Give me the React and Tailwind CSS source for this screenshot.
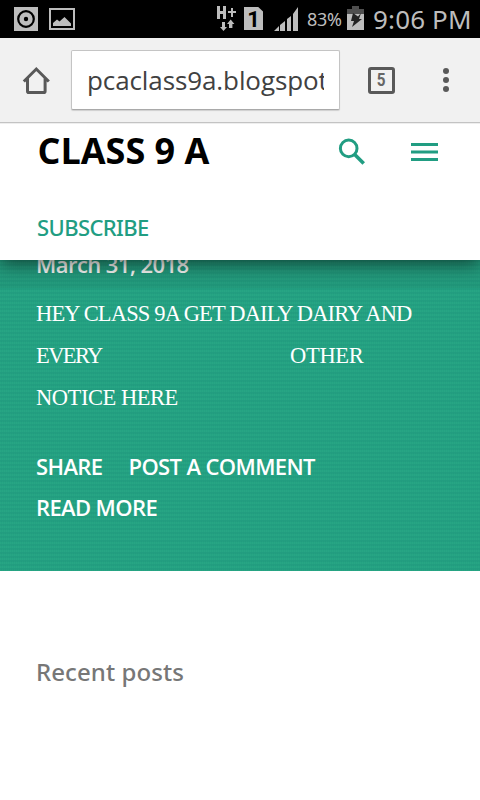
const tealDots =
  "bg-[#24a282] bg-[linear-gradient(#1c927955_50%,transparent_0),linear-gradient(90deg,#2fab8755_50%,transparent_0)] bg-[length:4px_4px,2px_2px]";

function StatusBar() {
  return (
    <div className="flex h-[38px] items-start bg-black text-[#bdbdbd]">
      <svg className="ml-[14px] mt-[7px] shrink-0" width="24" height="24" viewBox="0 0 24 24">
        <rect width="24" height="24" fill="#bdbdbd" />
        <circle cx="12" cy="12" r="7.8" fill="none" stroke="#000" strokeWidth="2.2" />
        <circle cx="12" cy="12" r="2.2" fill="#000" />
      </svg>
      <svg className="ml-[11px] mt-2 shrink-0" width="26" height="22" viewBox="0 0 26 22">
        <rect x="1" y="1" width="24" height="20" fill="none" stroke="#bdbdbd" strokeWidth="2" />
        <path d="M4 18V15L8 11.5L10.5 13.5L15.5 9L22 15.5V18Z" fill="#bdbdbd" />
      </svg>
      <svg className="ml-[142px] mt-[6px] shrink-0" width="20" height="26" viewBox="0 0 20 26">
        <path d="M0 0H3V5H6V0H9V13H6V8H3V13H0ZM14 2H16V5H19V7H16V11H14V7H11V5H14ZM5 16H8V21H10L6.5 25L3 21H5ZM12 22V18H10L13.7 13.5L17.4 18H15.4V22Z" fill="#bdbdbd" />
      </svg>
      <div className="ml-[7px] mt-[7px] flex h-[23px] w-[19px] shrink-0 justify-center bg-[#bdbdbd] [clip-path:polygon(0_0,75%_0,100%_20%,100%_100%,0_100%)]">
        <span className="mt-[2px] font-['Roboto',sans-serif] text-[22px] font-bold leading-[21px] text-black">1</span>
      </div>
      <svg className="ml-[11px] mt-[7px] shrink-0" width="25" height="24" viewBox="0 0 25 24">
        <path d="M0 24L5 19V24ZM6 18L11 14V24H6ZM13 12L17 9V24H13ZM19 7L24 0V24H19Z" fill="#bdbdbd" />
        <path d="M5.5 17V24M12 12V24M18 5V24" stroke="#000" />
      </svg>
      <span className="ml-[8px] mt-1 w-[35px] shrink-0 whitespace-nowrap font-['Noto_Sans',sans-serif] text-[18px] leading-[30px] tracking-[-0.3px]">83%</span>
      <svg className="ml-[5px] mt-[6px] shrink-0" width="18" height="24" viewBox="0 0 18 24">
        <path d="M0 3H5V0H12V3H17V9H0Z" fill="#4f4f4f" />
        <rect y="8" width="17" height="16" fill="#bdbdbd" />
        <path d="M6 7L11 10.5L14 7L12 13H15L5 21L7 15H4Z" fill="#222" />
      </svg>
      <span className="ml-[8px] shrink-0 whitespace-nowrap font-['Noto_Sans',sans-serif] text-[26px] leading-[38px] tracking-[0.15px]">9:06 PM</span>
    </div>
  );
}

function BrowserBar() {
  return (
    <div className="flex h-[85px] items-start border-b border-[#c3c3c3] bg-[#f1f1f1]">
      <svg className="ml-[22px] mt-[28px] shrink-0" width="28" height="29" viewBox="0 0 28 29" fill="none" stroke="#595959" strokeWidth="3">
        <path d="M1.8 15.5L14.3 3L26.8 15.5M5.5 12V25.2Q5.5 26.5 6.8 26.5H21.8Q23.1 26.5 23.1 25.2V12" />
      </svg>
      <div className="ml-[21px] mt-3 h-[60px] w-[269px] shrink-0 rounded-[2px] border border-[#c4c4c4] border-b-[#a9a9a9] bg-white pl-[15px] pr-[15px] shadow-[0_1px_1px_#cfcfcf]">
        <div className="overflow-hidden whitespace-nowrap font-['Open_Sans',sans-serif] text-[26px] leading-[59px] tracking-[-0.1px] text-[#414141]">pcaclass9a.blogspot</div>
      </div>
      <div className="ml-[28px] mt-[29px] flex h-[27px] w-[27px] shrink-0 items-center justify-center rounded-[3px] border-[3px] border-[#595959]">
        <span className="-mt-[2px] font-['Roboto',sans-serif] text-[18px] font-bold leading-[20px] text-[#666] [transform:scaleX(0.85)]">5</span>
      </div>
      <div className="ml-[48px] mt-[30px] flex flex-col gap-[3px]">
        <i className="h-[6px] w-[6px] rounded-full bg-[#595959]" />
        <i className="h-[6px] w-[6px] rounded-full bg-[#595959]" />
        <i className="h-[6px] w-[6px] rounded-full bg-[#595959]" />
      </div>
    </div>
  );
}

function BlogHeader() {
  return (
    <header className="relative z-10 h-[137px] border-t border-[#eeeeee] bg-white font-['Open_Sans',sans-serif] shadow-[0_3px_18px_rgba(0,0,0,0.6)] [clip-path:inset(0_0_-40px_0)]">
      <div className="flex items-start">
        <h1 className="ml-[37.5px] mt-1 w-[300.5px] whitespace-nowrap text-[36px] font-bold leading-[46px] text-black">CLASS 9 A</h1>
        <svg className="mt-[14px] shrink-0" width="28" height="28" viewBox="0 0 28 28" fill="none" stroke="#219d82" strokeWidth="3">
          <circle cx="10.7" cy="10.4" r="8.3" />
          <path d="M16.7 16.5L25.7 25.5" strokeWidth="3.6" />
        </svg>
        <svg className="ml-[45px] mt-[19px] shrink-0" width="27" height="18" viewBox="0 0 27 18" fill="#219d82">
          <path d="M0 0H27V3H0ZM0 7.4H27V10.6H0ZM0 15H27V18H0Z" />
        </svg>
      </div>
      <div className="ml-[37px] mt-[38px] font-['Noto_Sans',sans-serif] text-[22px] font-medium leading-[30px] tracking-[-0.6px] text-[#219d82]">SUBSCRIBE</div>
    </header>
  );
}

function FeaturedPost() {
  return (
    <article className={"h-[311px] pl-9 text-white " + tealDots}>
      <div className="-ml-9 flex h-[28px] items-start bg-black/5 pl-9">
        <time className="-mt-[11px] whitespace-nowrap font-['Open_Sans',sans-serif] text-[22px] font-semibold leading-[30px] tracking-[-0.55px] text-[#f4f4f2]">March 31, 2018</time>
      </div>
      <div className="mt-[5px] whitespace-nowrap font-['Liberation_Serif',serif] text-[22.5px] leading-[42px]">
        <p className="tracking-[-0.84px]">HEY CLASS 9A GET DAILY DAIRY AND</p>
        <p className="flex"><span className="w-[254px] tracking-[-1.6px]">EVERY</span><span className="tracking-[-0.3px]">OTHER</span></p>
        <p className="tracking-[-0.45px]">NOTICE HERE</p>
      </div>
      <div className="mt-[27px] whitespace-nowrap font-['Open_Sans',sans-serif] text-[22px] font-semibold leading-[41px] tracking-[-0.62px]">
        <div className="flex"><span className="w-[92.5px]">SHARE</span><span>POST A COMMENT</span></div>
        <div>READ MORE</div>
      </div>
    </article>
  );
}

export default function App() {
  return (
    <div className="h-[800px] w-[480px] overflow-hidden bg-white">
      <StatusBar />
      <BrowserBar />
      <BlogHeader />
      <FeaturedPost />
      <h2 className="ml-9 mt-[85px] font-['Noto_Sans',sans-serif] text-[24px] font-medium leading-[32px] tracking-[0.08px] text-[#777777]">Recent posts</h2>
    </div>
  );
}
